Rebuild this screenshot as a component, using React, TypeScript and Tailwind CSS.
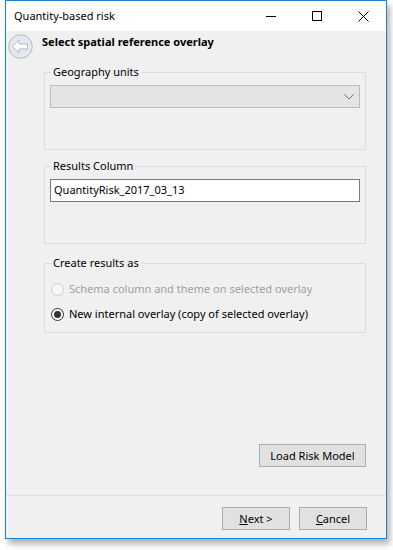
const font = { fontFamily: '"Noto Sans", "Open Sans", Arial, sans-serif' };

const BackArrow = () => (
  <svg width="25" height="25" viewBox="0 0 25 25" className="shrink-0">
    <circle cx="12.5" cy="12.5" r="11.8" fill="#e6e8f0" stroke="#b4b8c6" />
    <path
      d="M4.5 12.5 L11 6 L11 10 L19.5 10 L19.5 15 L11 15 L11 19 Z"
      fill="#ffffff"
      stroke="#b4b8c6"
      strokeLinejoin="round"
    />
  </svg>
);

const GroupBox = ({ label, children, className }: { label: string; children: React.ReactNode; className?: string }) => (
  <fieldset className={`border border-[#dcdcdc] w-[322px] ml-[38px] px-[5px] ${className ?? ''}`}>
    <legend className="ml-[1px] px-[2px] text-[11px] leading-[16px] text-black">{label}</legend>
    {children}
  </fieldset>
);

const Radio = ({ checked, disabled, label }: { checked?: boolean; disabled?: boolean; label: string }) => (
  <div className="flex items-center h-[16px]">
    <span
      className={`ml-[1px] w-[13px] h-[13px] rounded-full border flex items-center justify-center ${
        disabled ? 'border-[#cccccc] bg-[#f7f7f7]' : 'border-[#333333] bg-white'
      }`}
    >
      {checked && <span className="w-[7px] h-[7px] rounded-full bg-[#333333]" />}
    </span>
    <span className={`ml-[5px] text-[11px] leading-[16px] ${disabled ? 'text-[#a0a0a0]' : 'text-black'}`}>{label}</span>
  </div>
);

const Button = ({ children, className }: { children: React.ReactNode; className?: string }) => (
  <button
    className={`h-[23px] bg-[#e1e1e1] border border-[#adadad] text-[11px] leading-[16px] text-black ${className ?? ''}`}
  >
    {children}
  </button>
);

export default function App() {
  return (
    <div className="w-[393px] h-[550px] bg-white pl-[5px]" style={font}>
      <div className="w-[382px] h-[539px] border border-[#1883d7] flex flex-col shadow-[3px_5px_6px_rgba(0,0,0,0.3)]">
        {/* title bar */}
        <div className="h-[30px] bg-white flex items-center">
          <span className="pl-[8px] text-[11px] text-black flex-1">Quantity-based risk</span>
          <div className="w-[46px] h-[30px] flex items-center justify-center">
            <div className="w-[10px] h-[1px] bg-black" />
          </div>
          <div className="w-[46px] h-[30px] flex items-center justify-center">
            <div className="w-[10px] h-[10px] border border-black" />
          </div>
          <div className="w-[46px] h-[30px] flex items-center justify-center">
            <svg width="11" height="11" viewBox="0 0 11 11">
              <path d="M0.5 0.5 L10.5 10.5 M10.5 0.5 L0.5 10.5" stroke="#000" strokeWidth="1" />
            </svg>
          </div>
        </div>

        {/* content */}
        <div className="flex-1 bg-[#f0f0f0] flex flex-col">
          <div className="flex-1 flex flex-col pb-[28px]">
            <div className="flex items-start mt-[3px] ml-[2px]">
              <BackArrow />
              <span className="ml-[9px] text-[11px] leading-[16px] font-bold text-black">
                Select spatial reference overlay
              </span>
            </div>

            <GroupBox label="Geography units" className="mt-[5px] pb-[41px]">
              <div className="mt-[5px] h-[23px] bg-[#e4e4e4] border border-[#bcbcbc] flex items-center justify-end pr-[5px]">
                <svg width="10" height="6" viewBox="0 0 10 6">
                  <path d="M0.5 0.5 L5 5 L9.5 0.5" fill="none" stroke="#6d6d6d" strokeWidth="1" />
                </svg>
              </div>
            </GroupBox>

            <GroupBox label="Results Column" className="mt-[8px] pb-[41px]">
              <div className="mt-[5px] h-[23px] bg-white border border-[#7a7a7a] flex items-center pl-[3px] text-[11px] text-black">
                QuantityRisk_2017_03_13
              </div>
            </GroupBox>

            <GroupBox label="Create results as" className="mt-[11px] pb-[10px]">
              <div className="mt-[10px] flex flex-col gap-[9px]">
                <Radio disabled label="Schema column and theme on selected overlay" />
                <Radio checked label="New internal overlay (copy of selected overlay)" />
              </div>
            </GroupBox>

            <div className="mt-auto flex justify-end pr-[20px]">
              <Button className="w-[107px]">Load Risk Model</Button>
            </div>
          </div>

          <div className="border-t border-[#dfdfdf] h-[43px] pt-[11px] flex justify-end gap-[9px] pr-[19px]">
            <Button className="w-[68px]">
              <span className="underline">N</span>ext &gt;
            </Button>
            <Button className="w-[68px]">
              <span className="underline">C</span>ancel
            </Button>
          </div>
        </div>
      </div>
    </div>
  );
}
